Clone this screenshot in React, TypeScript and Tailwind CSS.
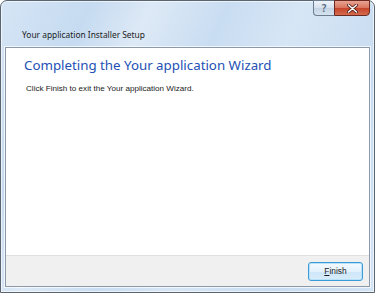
import React from 'react';

export default function App() {
    return (
        <div className="w-[375px] h-[293px] bg-white" style={{ fontFamily: '"Noto Sans", "Open Sans", sans-serif' }}>
            <div className="relative flex h-full flex-col rounded-t-[7px] border border-[#5b6570] bg-[linear-gradient(115deg,#d5e5f5_0%,#c6dbf1_18%,#dde9f6_30%,#c9ddf2_45%,#d7e6f5_60%,#c8dcf1_80%,#d2e3f4_100%)] px-[4px] pb-[5px] shadow-[inset_0_0_0_1px_rgba(255,255,255,0.6)]">
                {/* caption buttons */}
                <div className="absolute right-[4px] top-[-1px] flex h-[16px]">
                    <div className="flex w-[21px] items-center justify-center rounded-bl-[4px] border border-r-0 border-[#6b7c8f] bg-[linear-gradient(#eef3f9,#d6e1ee_50%,#c4d3e4_51%,#d6e3f0)] text-[10px] font-semibold leading-none text-[#56687c]">
                        ?
                    </div>
                    <div className="flex w-[36px] items-center justify-center rounded-br-[4px] border border-[#6b2a1f] bg-[linear-gradient(#e8a493,#d9735c_50%,#c7442a_51%,#d36b4f)]">
                        <svg width="11" height="9" viewBox="0 0 11 9">
                            <path d="M1.5 1 L9.5 8 M9.5 1 L1.5 8" stroke="#4a1a12" strokeWidth="3" strokeLinecap="round" />
                            <path d="M1.5 1 L9.5 8 M9.5 1 L1.5 8" stroke="#ffffff" strokeWidth="1.6" strokeLinecap="round" />
                        </svg>
                    </div>
                </div>

                {/* title */}
                <div className="flex h-[46px] items-end pb-[7px] pl-[17px]">
                    <span className="text-[8.4px] leading-[10px] text-[#1b1b1b]">Your application Installer Setup</span>
                </div>

                {/* content */}
                <div className="flex flex-1 flex-col border border-[#8c99a8] bg-white shadow-[0_0_0_1px_rgba(255,255,255,0.7)]">
                    <div className="flex-1 px-[18px] pt-[8px]">
                        <div className="text-[13.3px] leading-[18px] text-[#2350b5]">Completing the Your application Wizard</div>
                        <div className="mt-[10px] pl-[2px] font-['Liberation_Sans_Narrow','Liberation_Sans',sans-serif] text-[8.1px] leading-[10px] text-[#1b1b1b]">
                            Click Finish to exit the Your application Wizard.
                        </div>
                    </div>
                    <div className="flex h-[31px] items-start justify-end border-t border-[#dfdfdf] bg-[#f0f0f0] pr-[6px] pt-[6px]">
                        <button className="flex h-[19px] w-[55px] items-center justify-center rounded-[3px] border border-[#3c9ad6] bg-[linear-gradient(#f4fafe,#e3f1fc_50%,#cde6f8_51%,#d9edfb)] font-['Liberation_Sans_Narrow','Liberation_Sans',sans-serif] text-[8.4px] leading-none text-[#1b1b1b] shadow-[inset_0_0_0_1px_#b8e2fb]">
                            <span>
                                <span className="underline">F</span>inish
                            </span>
                        </button>
                    </div>
                </div>
            </div>
        </div>
    );
}
